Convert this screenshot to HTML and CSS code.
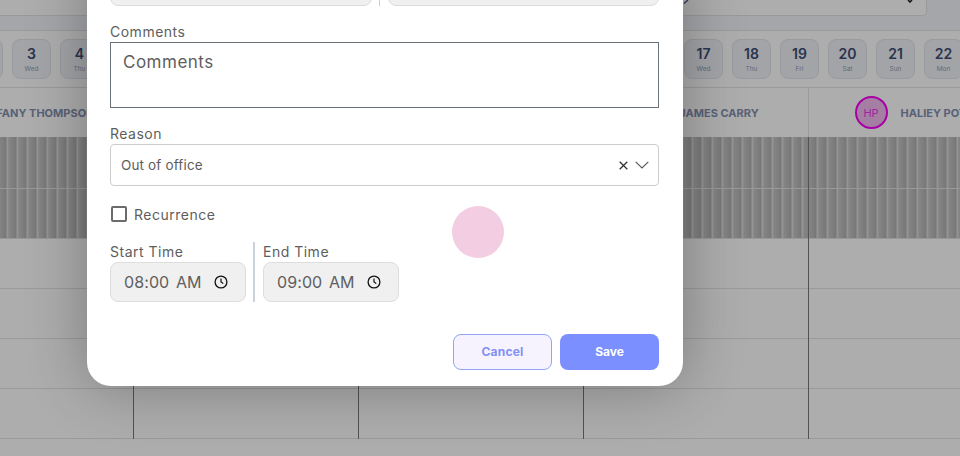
FILE: index.html
```html
<!DOCTYPE html>
<html lang="en">
<head>
    <meta charset="UTF-8">
    <meta name="viewport" content="width=device-width, initial-scale=1.0">
    <title>Schedule</title>
    <link rel="stylesheet" href="styles.css">
</head>
<body>
    <!-- Calendar behind the dialog -->
    <div class="calendar">
        <div class="toolbar">
            <div class="toolbar-box">
                <svg class="box-mark" width="6" height="4" viewBox="0 0 6 4"><path d="M1 3.5L5 0" stroke="#3c4e7e" stroke-width="1.2" fill="none"/></svg>
                <svg class="box-arrow" width="8" height="3" viewBox="0 0 8 3"><path d="M2 0l2 2 2-2" stroke="#222" stroke-width="1.6" fill="none"/></svg>
            </div>
        </div>
        <div class="dates">
            <div class="chip"><b>2</b><span>Tue</span></div>
            <div class="chip"><b>3</b><span>Wed</span></div>
            <div class="chip"><b>4</b><span>Thu</span></div>
            <div class="chip"><b>5</b><span>Fri</span></div>
            <div class="chip"><b>6</b><span>Sat</span></div>
            <div class="chip"><b>7</b><span>Sun</span></div>
            <div class="chip"><b>8</b><span>Mon</span></div>
            <div class="chip"><b>9</b><span>Tue</span></div>
            <div class="chip"><b>10</b><span>Wed</span></div>
            <div class="chip"><b>11</b><span>Thu</span></div>
            <div class="chip"><b>12</b><span>Fri</span></div>
            <div class="chip"><b>13</b><span>Sat</span></div>
            <div class="chip"><b>14</b><span>Sun</span></div>
            <div class="chip"><b>15</b><span>Mon</span></div>
            <div class="chip"><b>16</b><span>Tue</span></div>
            <div class="chip"><b>17</b><span>Wed</span></div>
            <div class="chip"><b>18</b><span>Thu</span></div>
            <div class="chip"><b>19</b><span>Fri</span></div>
            <div class="chip"><b>20</b><span>Sat</span></div>
            <div class="chip"><b>21</b><span>Sun</span></div>
            <div class="chip"><b>22</b><span>Mon</span></div>
        </div>
        <div class="staff">
            <div class="staff-col"><i class="avatar">TT</i>TIFFANY THOMPSON</div>
            <div class="staff-col"><i class="avatar">AB</i>ANNA BROWN</div>
            <div class="staff-col"><i class="avatar">MK</i>MARK KELLY</div>
            <div class="staff-col"><i class="avatar">JC</i>JAMES CARRY</div>
            <div class="staff-col"><i class="avatar">HP</i>HALIEY POTTER</div>
        </div>
        <div class="slots">
            <div class="slot-col"><div class="slot off"></div><div class="slot off"></div><div class="slot"></div><div class="slot"></div><div class="slot"></div><div class="slot"></div></div>
            <div class="slot-col"><div class="slot off"></div><div class="slot off"></div><div class="slot"></div><div class="slot"></div><div class="slot"></div><div class="slot"></div></div>
            <div class="slot-col"><div class="slot off"></div><div class="slot off"></div><div class="slot"></div><div class="slot"></div><div class="slot"></div><div class="slot"></div></div>
            <div class="slot-col"><div class="slot off"></div><div class="slot off"></div><div class="slot"></div><div class="slot"></div><div class="slot"></div><div class="slot"></div></div>
            <div class="slot-col"><div class="slot off"></div><div class="slot off"></div><div class="slot"></div><div class="slot"></div><div class="slot"></div><div class="slot"></div></div>
        </div>
    </div>

    <div class="backdrop"></div>

    <div class="modal">
        <div class="top-fields">
            <div class="top-input first"></div>
            <div class="top-divider"></div>
            <div class="top-input"></div>
        </div>

        <label class="field-label comments-label">Comments</label>
        <textarea class="comments">Comments</textarea>

        <label class="field-label reason-label">Reason</label>
        <div class="select">
            <span class="select-value">Out of office</span>
            <svg class="select-x" width="9" height="9" viewBox="0 0 9 9"><path d="M.7.7l7.6 7.6M8.3.7L.7 8.3" stroke="#333" stroke-width="1.3" fill="none"/></svg>
            <svg class="select-arrow" width="14" height="8" viewBox="0 0 14 8"><path d="M.7.8L7 7l6.3-6.2" stroke="#555" stroke-width="1.1" fill="none"/></svg>
        </div>

        <div class="recurrence">
            <span class="checkbox"></span>
            <span>Recurrence</span>
        </div>

        <div class="times">
            <div class="time-field">
                <label class="field-label">Start Time</label>
                <div class="time-input">
                    <span>08:00 AM</span>
                    <svg width="14" height="14" viewBox="0 0 14 14"><circle cx="7" cy="7" r="5.9" stroke="#111" stroke-width="1.3" fill="none"/><path d="M7 3.6V7l2.3 1.5" stroke="#111" stroke-width="1.2" fill="none"/></svg>
                </div>
            </div>
            <div class="time-divider"></div>
            <div class="time-field">
                <label class="field-label">End Time</label>
                <div class="time-input">
                    <span>09:00 AM</span>
                    <svg width="14" height="14" viewBox="0 0 14 14"><circle cx="7" cy="7" r="5.9" stroke="#111" stroke-width="1.3" fill="none"/><path d="M7 3.6V7l2.3 1.5" stroke="#111" stroke-width="1.2" fill="none"/></svg>
                </div>
            </div>
        </div>

        <div class="actions">
            <button class="btn-cancel">Cancel</button>
            <button class="btn-save">Save</button>
        </div>
    </div>

    <!-- Touch marker from the recording -->
    <div class="touch"></div>
</body>
</html>
```

FILE: styles.css
```css
body {
    font-family: Inter, "Open Sans", sans-serif;
    margin: 0;
    width: 960px;
    height: 456px;
    overflow: hidden;
    position: relative;
    background-color: #fff;
}

.calendar {
    width: 960px;
    height: 456px;
    overflow: hidden;
}

.toolbar {
    height: 30px;
    background-color: #f2f5fb;
    border-bottom: 1px solid #e3e3e3;
}

.toolbar-box {
    position: relative;
    width: 926px;
    height: 15px;
    background-color: #fff;
    border: 1px solid #e2e2e2;
    border-top: none;
    border-radius: 0 0 5px 0;
    margin-left: -1px;
}

.box-mark {
    position: absolute;
    left: 683px;
    top: 0;
}

.box-arrow {
    position: absolute;
    left: 906px;
    top: 0;
}

.dates {
    display: flex;
    gap: 9px;
    height: 57px;
    box-sizing: border-box;
    padding-top: 8px;
    margin-left: -36px;
    background-color: #fff;
    border-bottom: 1px solid #e3e3e3;
}

.chip {
    flex: none;
    width: 39px;
    height: 40px;
    box-sizing: border-box;
    background-color: #eff2f7;
    border: 1px solid #e2e4e8;
    border-radius: 8px;
    display: flex;
    flex-direction: column;
    align-items: center;
    padding-top: 4px;
}

.chip b {
    font-size: 14px;
    line-height: 20px;
    font-weight: 600;
    color: #3f4d72;
}

.chip span {
    font-size: 6.5px;
    line-height: 10px;
    color: #8f9bb5;
}

.staff {
    display: flex;
    height: 49px;
    margin-left: -91px;
    background-color: #fff;
}

.staff-col {
    flex: none;
    width: 225px;
    box-sizing: border-box;
    border-right: 1px solid #e3e3e3;
    display: flex;
    align-items: center;
    justify-content: center;
    gap: 13px;
    font-size: 11px;
    font-weight: 700;
    color: #838fb0;
    white-space: nowrap;
}

.staff-col:first-child {
    padding-right: 14px;
}

.avatar {
    flex: none;
    width: 33px;
    height: 33px;
    box-sizing: border-box;
    border: 2px solid #f700f7;
    border-radius: 50%;
    background-color: #f2bcf0;
    color: #f032e8;
    font-style: normal;
    font-weight: 400;
    font-size: 11px;
    display: flex;
    align-items: center;
    justify-content: center;
}

.slots {
    display: flex;
    margin-left: -91px;
}

.slot-col {
    flex: none;
    width: 225px;
    box-sizing: border-box;
    border-right: 1px solid #7a7a7a;
}

.slot {
    height: 50px;
    box-sizing: border-box;
    background-color: #fff;
    border-bottom: 1px solid #e3e3e3;
}

.slot.off {
    background-color: #c4c4c4;
    background-image: repeating-linear-gradient(90deg, #c4c4c4 0, #bcbcbc 3px, #b0b0b0 7px, #e0e0e0 8px, #d4d4d4 9px, #c4c4c4 10px);
    border-bottom: 1px solid #e0e0e0;
}

.slot.off:first-child {
    height: 52px;
}

.backdrop {
    position: absolute;
    top: 0;
    left: 0;
    width: 100%;
    height: 100%;
    background-color: rgba(0, 0, 0, 0.32);
}

.modal {
    position: absolute;
    left: 87px;
    top: -40px;
    width: 596px;
    height: 426px;
    box-sizing: border-box;
    padding: 0 24px 0 23px;
    background-color: #fff;
    border-radius: 24px;
    box-shadow: 0 0 60px rgba(0, 0, 0, 0.3);
    color: #5e5e5e;
}

.top-fields {
    display: flex;
    gap: 8px;
    height: 46px;
}

.top-input {
    flex: 1;
    box-sizing: border-box;
    background-color: #f0f0f0;
    border: 1px solid #dcdcdc;
    border-radius: 8px;
}

.top-input.first {
    flex: none;
    width: 262px;
}

.top-divider {
    width: 1px;
    margin-left: -1px;
    background-color: #c8ced6;
}

.field-label {
    display: block;
    font-size: 14px;
    line-height: 18px;
    letter-spacing: 0.5px;
    color: #5e5e5e;
}

.comments-label {
    margin-top: 17px;
    margin-bottom: 1px;
}

.comments {
    display: block;
    width: 549px;
    height: 66px;
    box-sizing: border-box;
    margin: 0;
    padding: 7px 12px;
    border: 1px solid #6b7178;
    border-radius: 0;
    resize: none;
    font-family: inherit;
    font-size: 17px;
    line-height: 24px;
    letter-spacing: 0.5px;
    color: #5e5e5e;
}

.reason-label {
    margin-top: 17px;
    margin-bottom: 1px;
}

.select {
    display: flex;
    align-items: center;
    width: 549px;
    height: 42px;
    box-sizing: border-box;
    padding: 0 9px 0 10px;
    border: 1px solid #ccc;
    border-radius: 4px;
    font-size: 13.5px;
    letter-spacing: 0.15px;
}

.select-value {
    flex: 1;
}

.select-x {
    margin-right: 7px;
}

.recurrence {
    display: flex;
    align-items: center;
    gap: 7px;
    margin: 20px 0 0 1px;
    height: 16px;
    font-size: 14px;
    line-height: 15px;
    letter-spacing: 0.5px;
}

.checkbox {
    width: 16px;
    height: 16px;
    box-sizing: border-box;
    border: 2px solid #6b6b6b;
    border-radius: 2px;
}

.times {
    display: flex;
    margin-top: 20px;
    height: 60px;
}

.time-field {
    width: 136px;
    padding-top: 1px;
}

.time-field .field-label {
    margin-bottom: 1px;
}

.time-divider {
    width: 2px;
    background-color: #ccd2d9;
    margin: 0 8px 0 7px;
}

.time-input {
    display: flex;
    align-items: center;
    justify-content: space-between;
    width: 136px;
    height: 40px;
    box-sizing: border-box;
    padding: 0 17px 0 13px;
    background-color: #f0f0f0;
    border: 1px solid #ddd;
    border-radius: 8px;
    font-size: 16px;
    word-spacing: 2px;
    letter-spacing: 0.1px;
    color: #5e5e5e;
}

.actions {
    display: flex;
    justify-content: flex-end;
    gap: 8px;
    margin-top: 32px;
}

.actions button {
    width: 99px;
    height: 36px;
    box-sizing: border-box;
    padding: 0 0 2px;
    border-radius: 8px;
    font-family: inherit;
    font-size: 12px;
    font-weight: 700;
}

.btn-cancel {
    background-color: #f6f3fe;
    border: 1px solid #94a2fb;
    color: #8190f5;
    letter-spacing: 0.2px;
}

.btn-save {
    background-color: #7b8ffe;
    border: none;
    color: #fff;
}

.touch {
    position: absolute;
    left: 452px;
    top: 206px;
    width: 52px;
    height: 52px;
    border-radius: 50%;
    background-color: #f3cde1;
}
```
